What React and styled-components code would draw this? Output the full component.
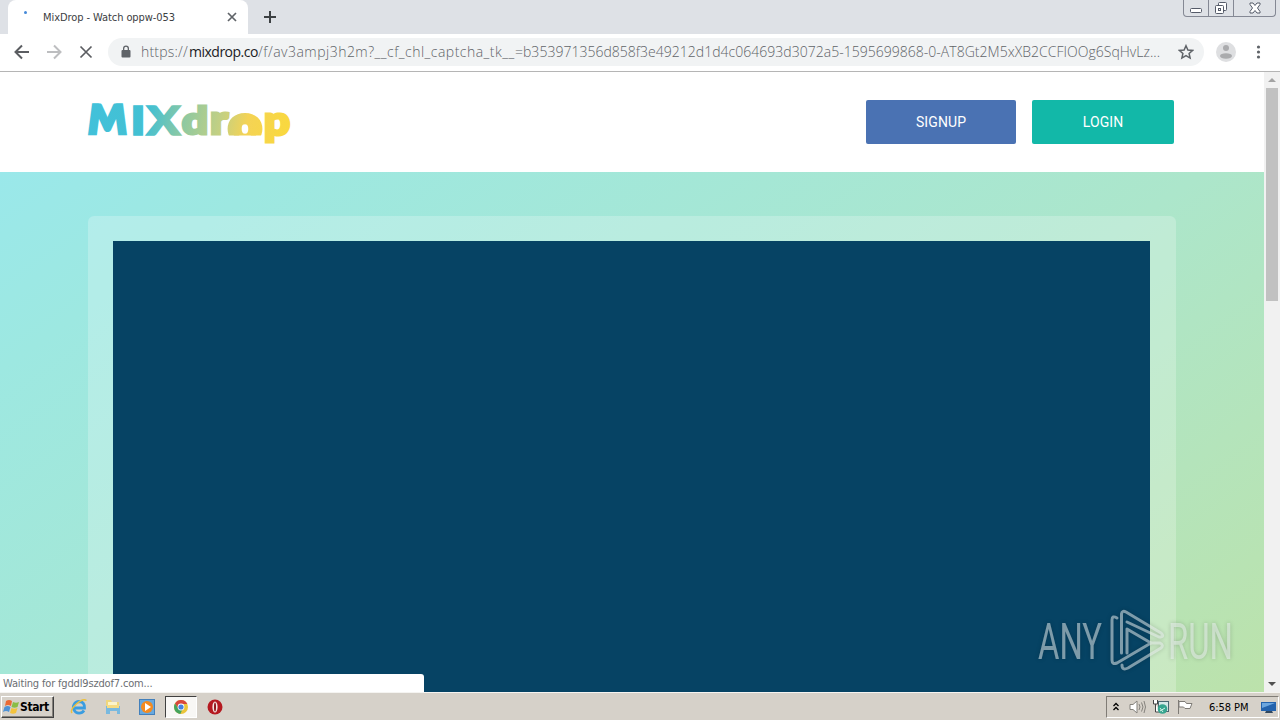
import styled, { createGlobalStyle } from 'styled-components';

const GlobalStyle = createGlobalStyle`
  * {
    box-sizing: border-box;
  }

  body {
    margin: 0;
    overflow: hidden;
    font-family: 'DejaVu Sans Condensed', 'DejaVu Sans', sans-serif;
  }

  svg {
    display: block;
    flex: none;
  }
`;

const Desktop = styled.div`
  width: 1280px;
  height: 720px;
  display: flex;
  flex-direction: column;
  position: relative;
  overflow: hidden;
`;

const TabStrip = styled.div`
  height: 34px;
  flex: none;
  display: flex;
  align-items: flex-start;
  background: #dee1e6;
`;

const Tab = styled.div`
  width: 240px;
  height: 34px;
  margin-left: 8px;
  padding: 0 11px 0 12px;
  display: flex;
  align-items: center;
  background: white;
  border-radius: 8px 8px 0 0;
`;

const Spinner = styled.span`
  width: 3px;
  height: 3px;
  margin: -10px 16px 0 4px;
  border-radius: 50%;
  background: #4589d8;
`;

const TabTitle = styled.span`
  flex: 1;
  font-size: 11px;
  letter-spacing: -0.08px;
  color: #3c4043;
  white-space: nowrap;
`;

const NewTab = styled.div`
  height: 34px;
  margin-left: 15px;
  display: flex;
  align-items: center;
`;

const WindowButtons = styled.div`
  height: 17px;
  margin: 0 4px 0 auto;
  display: flex;
  border: 1px solid #848894;
  border-top: 0;
  border-radius: 0 0 4px 4px;
`;

const WindowButton = styled.div`
  width: ${(props) => props.$width}px;
  display: flex;
  align-items: center;
  justify-content: center;

  & + & {
    border-left: 1px solid #848894;
  }
`;

const Toolbar = styled.div`
  height: 38px;
  flex: none;
  display: flex;
  align-items: center;
  padding: 0 12px 1px 14px;
  background: white;
  border-bottom: 1px solid #b5b5b5;
`;

const NavIcon = styled.div`
  width: 16px;
  margin-right: 16px;
`;

const AddressBar = styled.div`
  width: 1096px;
  height: 28px;
  margin-left: -2px;
  padding: 0 10px 0 12px;
  display: flex;
  align-items: center;
  background: #f1f3f4;
  border-radius: 14px;
`;

const Url = styled.div`
  flex: 1;
  margin-left: 9px;
  padding-bottom: 2px;
  display: flex;
  font-family: 'Open Sans', 'Noto Sans', sans-serif;
  font-size: 14px;
  white-space: nowrap;
`;

const UrlPart = styled.span`
  width: ${(props) => props.$width}px;
  letter-spacing: ${(props) => props.$spacing};
  color: ${(props) => (props.$host ? '#202124' : '#5f6368')};
  font-weight: ${(props) => (props.$host ? 400 : 300)};
`;

const Avatar = styled.div`
  margin: 0 17px 0 12px;
`;

const Viewport = styled.div`
  height: 620px;
  flex: none;
  display: flex;
  overflow: hidden;
`;

const Page = styled.div`
  flex: 1;
  display: flex;
  flex-direction: column;
`;

const Header = styled.header`
  height: 100px;
  flex: none;
  padding: 0 90px 0 78px;
  display: flex;
  align-items: center;
  background: white;
`;

const Actions = styled.div`
  margin-left: auto;
  display: flex;
  gap: 16px;
`;

const Button = styled.button`
  width: ${(props) => props.$width}px;
  height: 44px;
  padding: 0;
  border: 0;
  border-radius: 2px;
  background: ${(props) => props.$color};
  color: white;
  font-family: Roboto, sans-serif;
  font-size: 14px;
  font-weight: 400;
  letter-spacing: 0.1px;
`;

const Stage = styled.main`
  flex: 1;
  padding: 44px 88px 0;
  display: flex;
  background: linear-gradient(145deg, #9ae8ea, #9de8e1 14%, #ace6cb 60%, #bce2ab);
`;

const PlayerFrame = styled.section`
  flex: 1;
  padding: 25px 26px 0 25px;
  display: flex;
  background: rgba(255, 255, 255, 0.23);
  border-radius: 6px 6px 0 0;
`;

const Player = styled.div`
  flex: 1;
  background: #064364;
`;

const Scrollbar = styled.div`
  width: 16px;
  display: flex;
  flex-direction: column;
  align-items: center;
  background: #f1f1f1;
`;

const ScrollArrow = styled.div`
  height: 16px;
  display: flex;
  align-items: center;
`;

const ScrollThumb = styled.div`
  width: 12px;
  height: 213px;
  margin-bottom: auto;
  background: #c1c1c1;
`;

const StatusBubble = styled.div`
  position: absolute;
  left: 0;
  bottom: 28px;
  width: 424px;
  height: 18px;
  padding: 1px 0 0 3px;
  background: white;
  border-top-right-radius: 3px;
  color: #6b6e72;
  font-size: 11px;
  line-height: 17px;
  letter-spacing: -0.16px;
`;

const Watermark = styled.div`
  position: absolute;
  left: 1030px;
  top: 590px;
  filter: drop-shadow(0 0 2px rgba(0, 0, 0, 0.35));
`;

const Taskbar = styled.footer`
  height: 28px;
  flex: none;
  padding: 2px 0 1px 1px;
  display: flex;
  align-items: center;
  background: #d6d1c9;
  border-top: 1px solid #f5f4f1;
`;

const StartButton = styled.div`
  width: 53px;
  height: 22px;
  margin-right: 9px;
  padding-left: 1px;
  display: flex;
  align-items: center;
  border: 1px solid;
  border-color: white #404040 #404040 white;
  box-shadow: inset -1px -1px #85817b;
  font-size: 12px;
  font-weight: bold;
  letter-spacing: -0.4px;
  color: black;
`;

const TaskItem = styled.div`
  width: 32px;
  height: 22px;
  margin-right: 2px;
  display: flex;
  align-items: center;
  justify-content: center;
  border: 1px solid ${(props) => (props.$active ? '#404040' : 'transparent')};
  border-right-color: ${(props) => (props.$active ? 'white' : 'transparent')};
  border-bottom-color: ${(props) => (props.$active ? 'white' : 'transparent')};
  background: ${(props) => (props.$active ? '#f8f7f5' : 'none')};
`;

const Tray = styled.div`
  width: 173px;
  height: 22px;
  margin: 0 1px 0 auto;
  padding-left: 6px;
  display: flex;
  align-items: center;
  border: 1px solid;
  border-color: #807c76 white white #807c76;
`;

const TrayIcon = styled.div`
  width: ${(props) => props.$width}px;
`;

const Clock = styled.span`
  width: 51px;
  font-size: 11px;
  letter-spacing: -0.05px;
  color: black;
  white-space: nowrap;
`;

const Logo = () => (
  <svg width="222" height="84" viewBox="78 80 222 84" fontFamily="Lato" fontWeight="900">
    <defs>
      <linearGradient id="logo" gradientUnits="userSpaceOnUse" x1="88" y1="104" x2="289" y2="144">
        <stop offset="0" stopColor="#42c1da" />
        <stop offset="0.3" stopColor="#43c0d2" />
        <stop offset="0.48" stopColor="#90c9a0" />
        <stop offset="0.65" stopColor="#c3d083" />
        <stop offset="0.78" stopColor="#f4d355" />
        <stop offset="1" stopColor="#fad93c" />
      </linearGradient>
      <text id="letter-m" x="86" y="134" textLength="43" lengthAdjust="spacingAndGlyphs">M</text>
      <clipPath id="m-left"><rect x="80" y="100" width="28" height="40" /></clipPath>
      <clipPath id="m-right"><rect x="107" y="100" width="28" height="40" /></clipPath>
      <clipPath id="drop"><rect x="225" y="108" width="40" height="27.5" /></clipPath>
    </defs>
    <g fill="url(#logo)" stroke="url(#logo)" strokeWidth="1.5" fontSize="40.5">
      {/* the legs of the M lean outwards */}
      <g strokeWidth="2.5">
        <use href="#letter-m" clipPath="url(#m-left)" transform="matrix(1 0 -0.129 1 17.4 0)" />
        <use href="#letter-m" clipPath="url(#m-right)" transform="matrix(1 0 0.129 1 -17.4 0)" />
      </g>
      <text x="130" y="134.5" textLength="16" lengthAdjust="spacingAndGlyphs">I</text>
      <text x="146.500" y="134.5" textLength="34" lengthAdjust="spacingAndGlyphs">X</text>
      <g strokeWidth="3">
        <text x="182" y="133.7" fontSize="37" textLength="26" lengthAdjust="spacingAndGlyphs">d</text>
        <text x="210" y="134" textLength="18" lengthAdjust="spacingAndGlyphs">r</text>
        <text x="264" y="134.5" textLength="26" lengthAdjust="spacingAndGlyphs">p</text>
      </g>
      <g clipPath="url(#drop)" strokeWidth="8">
        <text x="230" y="141" fontSize="46" fontWeight="400" textLength="30" lengthAdjust="spacingAndGlyphs">o</text>
      </g>
    </g>
  </svg>
);

const AnyRun = () => (
  <svg width="225" height="100" viewBox="0 -10 225 100" opacity="0.52">
    <g fill="#eef3f3" fontFamily="Roboto" fontSize="50">
      <text x="8" y="59" textLength="64" lengthAdjust="spacingAndGlyphs">ANY</text>
      <text x="138" y="59" textLength="65" lengthAdjust="spacingAndGlyphs">RUN</text>
    </g>
    <g fill="none" stroke="#eef3f3" strokeWidth="3" strokeLinejoin="round" strokeLinecap="round">
      <path d="M91.500 53V14Q92 10 96 12L131 33Q135 37 129 37L97 22" />
      <path d="M87 18Q82 15 82 20V60Q82 65 87 63L121 43L97 29V53" />
      <path d="M92 65Q92 71 98 68L131 48Q134 45 130 43L121 43" />
    </g>
  </svg>
);

const App = () => (
  <>
    <GlobalStyle />
    <Desktop>
      <TabStrip>
        <Tab>
          <Spinner />
          <TabTitle>MixDrop - Watch oppw-053</TabTitle>
          <svg width="10" height="10" stroke="#5f6368" strokeWidth="1.7">
            <path d="M1 1l8 8M9 1L1 9" />
          </svg>
        </Tab>
        <NewTab>
          <svg width="14" height="14" stroke="#3c4043" strokeWidth="2">
            <path d="M7 1v12M1 7h12" />
          </svg>
        </NewTab>
        <WindowButtons>
          <WindowButton $width={24}>
            <svg width="12" height="12" fill="white" stroke="#555b69">
              <rect x="0.5" y="6.5" width="11" height="4" rx="1" />
            </svg>
          </WindowButton>
          <WindowButton $width={25}>
            <svg width="14" height="14" fill="white" stroke="#555b69">
              <rect x="4.5" y="1.5" width="8" height="8" rx="1" />
              <rect x="1.5" y="4.5" width="8" height="8" rx="1" />
              <rect x="4.5" y="7.5" width="2" height="2" />
            </svg>
          </WindowButton>
          <WindowButton $width={42}>
            <svg width="12" height="12" fill="white" stroke="#555b69">
              <path d="M1 1h3l2 2.500 2-2.500h3v1.500L8.500 6l2.500 3.500V11H8L6 8.500 4 11H1V9.500L3.500 6 1 2.500z" />
            </svg>
          </WindowButton>
        </WindowButtons>
      </TabStrip>

      <Toolbar>
        <NavIcon>
          <svg width="16" height="16" fill="none" stroke="#5b5d61" strokeWidth="2">
            <path d="M15 8H2M8 1.500L1.500 8 8 14.500" />
          </svg>
        </NavIcon>
        <NavIcon>
          <svg width="16" height="16" fill="none" stroke="#bdbec0" strokeWidth="2">
            <path d="M1 8h13M8 1.500L14.500 8 8 14.500" />
          </svg>
        </NavIcon>
        <NavIcon>
          <svg width="16" height="16" fill="none" stroke="#5b5d61" strokeWidth="1.700">
            <path d="M2.500 2.500l11 11M13.500 2.500l-11 11" />
          </svg>
        </NavIcon>
        <AddressBar>
          <svg width="12" height="14" fill="#5f6368">
            <path fillRule="evenodd" d="M3 5V3.500a3 3 0 016 0V5h.5q1 0 1 1v5.500q0 1-1 1h-7q-1 0-1-1V6q0-1 1-1zM4.300 5h3.400V3.500a1.700 1.700 0 00-3.400 0z" />
          </svg>
          <Url>
            <UrlPart $width={48} $spacing="0.2px">https://</UrlPart>
            <UrlPart $width={69} $spacing="-0.5px" $host>mixdrop.co</UrlPart>
            <UrlPart $width={257} $spacing="0.48px">/f/av3ampj3h2m?__cf_chl_captcha_tk__</UrlPart>
            <UrlPart $width={647} $spacing="0.02px">=b353971356d858f3e49212d1d4c064693d3072a5-1595699868-0-AT8Gt2M5xXB2CCFIOOg6SqHvLz...</UrlPart>
          </Url>
          <svg width="16" height="16" fill="none" stroke="#5f6368" strokeWidth="1.5">
            <path d="M8 1.700l1.900 4.300 4.700.4-3.500 3.100 1 4.600L8 11.700l-4.100 2.400 1-4.600L1.400 6.400l4.700-.4z" />
          </svg>
        </AddressBar>
        <Avatar>
          <svg width="20" height="20">
            <circle cx="10" cy="10" r="10" fill="#dedfe1" />
            <circle cx="10" cy="6" r="3" fill="#aaabad" />
            <ellipse cx="10" cy="14" rx="6" ry="2.700" fill="#aaabad" />
          </svg>
        </Avatar>
        <svg width="10" height="16" fill="#5f6368">
          <circle cx="5.500" cy="3" r="1.600" />
          <circle cx="5.500" cy="8" r="1.600" />
          <circle cx="5.500" cy="13" r="1.600" />
        </svg>
      </Toolbar>

      <Viewport>
        <Page>
          <Header>
            <Logo />
            <Actions>
              <Button $width={150} $color="#4a72b3">SIGNUP</Button>
              <Button $width={142} $color="#12b8a8">LOGIN</Button>
            </Actions>
          </Header>
          <Stage>
            <PlayerFrame>
              <Player />
            </PlayerFrame>
          </Stage>
        </Page>
        <Scrollbar>
          <ScrollArrow>
            <svg width="8" height="4" fill="#a3a3a3"><path d="M0 4l4-4 4 4z" /></svg>
          </ScrollArrow>
          <ScrollThumb />
          <ScrollArrow>
            <svg width="8" height="4" fill="#505050"><path d="M0 0h8L4 4z" /></svg>
          </ScrollArrow>
        </Scrollbar>
      </Viewport>

      <Taskbar>
        <StartButton>
          <svg width="17" height="16">
            <path d="M3 2q3-2 6 0L8 7Q5 5 2 7z" fill="#ea6a35" />
            <path d="M10 3q3 1.500 6 0l-1.500 5q-3 1.500-6 0z" fill="#8abd45" />
            <path d="M1.500 8q3-2 6 0L6 13q-3-2-6 0z" fill="#4e92d6" />
            <path d="M8.500 9q3 1.500 6 0L13 14q-3 1.500-6 0z" fill="#f4c33c" />
          </svg>
          Start
        </StartButton>
        <TaskItem>
          <svg width="18" height="18" fill="none">
            <path d="M14 12.500A5.800 5.800 0 119 3.500c4 0 5.700 3 5.500 6.500H5" stroke="#3a9de0" strokeWidth="2.800" />
            <path d="M2 15C-1 11 12-1 16.500 2.500" stroke="#edc03c" strokeWidth="1.500" />
          </svg>
        </TaskItem>
        <TaskItem>
          <svg width="18" height="18">
            <path d="M2 2h5l1 2h7v9H2z" fill="#efd67c" />
            <path d="M4 4h9v4H4z" fill="#fbf4ca" />
            <path d="M2 8h14v8h-3v-3H6v3H2z" fill="#79b9df" />
            <path d="M3 7h12v3H3z" fill="#f6dc83" />
          </svg>
        </TaskItem>
        <TaskItem>
          <svg width="16" height="16">
            <rect x="0.500" y="0.500" width="15" height="15" fill="#68a9df" stroke="#4380bb" />
            <circle cx="8" cy="8" r="6" fill="#f48b20" />
            <path d="M6 4l6 4-6 4z" fill="white" />
          </svg>
        </TaskItem>
        <TaskItem $active>
          <svg width="14" height="14">
            <circle cx="7" cy="7" r="7" fill="#eac43a" />
            <path d="M1 3.500A7 7 0 0113.300 4H7L4.300 8.500z" fill="#d8473b" />
            <path d="M1 3.500l3.300 5 4 1.200L6.300 14A7 7 0 011 3.500z" fill="#44a35d" />
            <circle cx="7" cy="7" r="3.400" fill="white" />
            <circle cx="7" cy="7" r="2.600" fill="#4481e0" />
          </svg>
        </TaskItem>
        <TaskItem>
          <svg width="16" height="16">
            <circle cx="8" cy="8" r="7.500" fill="#b51920" />
            <ellipse cx="8" cy="8" rx="2.600" ry="5.500" fill="#f5e7e3" />
            <ellipse cx="8" cy="8" rx="1" ry="4.500" fill="#8e1519" />
          </svg>
        </TaskItem>
        <Tray>
          <TrayIcon $width={16}>
            <svg width="6" height="10" fill="none" stroke="black" strokeWidth="1.300">
              <path d="M0.500 4L3 1.500 5.500 4M0.500 8L3 5.500 5.500 8" />
            </svg>
          </TrayIcon>
          <TrayIcon $width={24}>
            <svg width="17" height="16" fill="none" stroke="#85827d">
              <path d="M1 5.500h3L8 2v12l-4-3.500H1z" fill="white" />
              <path d="M10 5q2 3 0 6M12.500 3.500q3 4.500 0 9M15 2q3 6 0 12" />
            </svg>
          </TrayIcon>
          <TrayIcon $width={24}>
            <svg width="16" height="16">
              <rect x="5.500" y="2.500" width="10" height="10" fill="#d6e9e8" stroke="#4b6670" />
              <path d="M0.500 1v4h4V1M2.500 5v8H7" stroke="#444" fill="white" />
              <circle cx="9.500" cy="10" r="4.800" fill="#37a58f" />
              <path d="M7 12l5-3M7 9l3 4" stroke="#d6f3e9" />
            </svg>
          </TrayIcon>
          <TrayIcon $width={32}>
            <svg width="16" height="16" fill="white" stroke="#7e7b76">
              <path d="M1.500 1v14M2 2.500h6l1.500 2H15l-2 5H8L6.500 8H2z" />
            </svg>
          </TrayIcon>
          <Clock>6:58 PM</Clock>
          <svg width="17" height="16">
            <path d="M1 3h15v9H1z" fill="#2463ad" />
            <path d="M2 4h13L2 9z" fill="#6da7df" />
            <path d="M6 12h6l1 2H5z" fill="#32485f" />
          </svg>
        </Tray>
      </Taskbar>

      <StatusBubble>Waiting for fgddl9szdof7.com...</StatusBubble>
      <Watermark>
        <AnyRun />
      </Watermark>
    </Desktop>
  </>
);

export default App;
